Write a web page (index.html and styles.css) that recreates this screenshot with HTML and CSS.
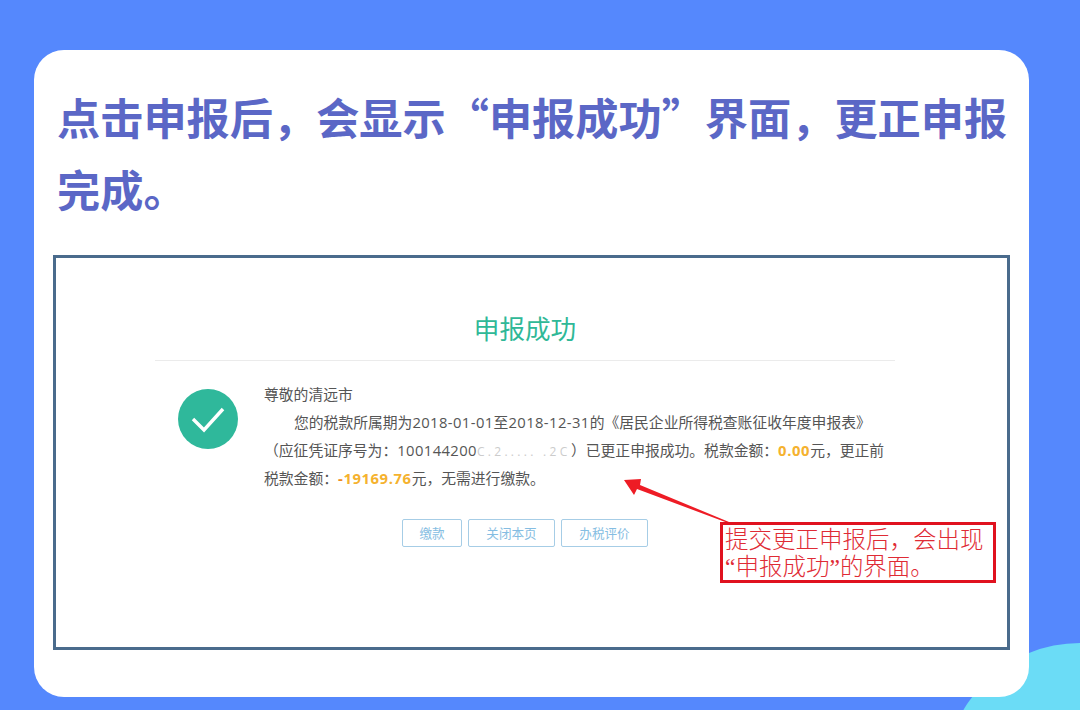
FILE: index.html
```html
<!DOCTYPE html>
<html lang="zh-CN">
<head>
<meta charset="utf-8">
<title>申报成功</title>
<link rel="stylesheet" href="styles.css">
</head>
<body>
<div class="blob"></div>
<main class="card">
  <h1 class="title">点击申报后，会显示“申报成功”界面，更正申报<br>完成。</h1>
  <section class="shot">
    <h2 class="shot-title">申报成功</h2>
    <div class="rule"></div>
    <div class="message">
      <div class="tick">
        <svg viewBox="0 0 60 60" width="60" height="60"><path d="M15 30 L26 41 L45 20" fill="none" stroke="#fff" stroke-width="3.4"/></svg>
      </div>
      <div class="copy">
        <p>尊敬的清远市</p>
        <p class="indent">您的税款所属期为<span class="num">2018-01-01</span>至<span class="num">2018-12-31</span>的《居民企业所得税查账征收年度申报表》</p>
        <p>（应征凭证序号为：<span class="num">100144200</span><span class="redact">C.2.....  .2C</span>）已更正申报成功。税款金额：<b class="amt">0.00</b>元，更正前</p>
        <p>税款金额：<b class="amt"><span class="minus">-</span>19169.76</b>元，无需进行缴款。</p>
      </div>
    </div>
    <div class="buttons">
      <span class="btn btn-short">缴款</span>
      <span class="btn">关闭本页</span>
      <span class="btn">办税评价</span>
    </div>
    <svg class="arrow" viewBox="0 0 110 50" width="110" height="50"><path d="M3 3 L20 2 L19 8 L108 45 L107 46 L16 12 L13 18 Z" fill="#ee1c25"/></svg>
    <div class="note">
      <div>提交更正申报后，会出现</div>
      <div><span class="q">“</span>申报成功<span class="q">”</span>的界面。</div>
    </div>
  </section>
</main>
</body>
</html>
```
FILE: styles.css
```css
* { box-sizing: border-box; }
html, body { margin: 0; height: 710px; overflow: hidden; }
body {
  position: relative;
  background: #5588fd;
  padding: 50px 51px 13px 34px;
  font-family: "Noto Sans CJK SC", "Open Sans", sans-serif;
}
.blob {
  position: absolute;
  left: 945px;
  top: 643px;
  width: 135px;
  height: 67px;
  clip-path: circle(135px at 135px 135px);
  background: #6bdcf6;
}
.card {
  position: relative;
  height: 647px;
  background: #fff;
  border-radius: 30px;
  padding: 30px 19px 0 19px;
}
.title {
  margin: 0 0 31px 4px;
  font-size: 43.2px;
  line-height: 72px;
  font-weight: 700;
  color: #5b67c6;
  white-space: nowrap;
}
.shot {
  position: relative;
  width: 957px;
  height: 395px;
  border: 3px solid #4a6b8c;
  padding: 52px 112px 0 99px;
}
.shot-title {
  margin: 0;
  text-align: center;
  font-size: 25.6px;
  line-height: 36px;
  font-weight: 400;
  color: #2fb897;
}
.rule {
  height: 1px;
  margin-top: 14px;
  background: #ebebeb;
}
.message {
  display: flex;
  margin: 19px 0 0 23px;
}
.tick {
  width: 60px;
  height: 60px;
  margin-top: 9px;
  border-radius: 50%;
  background: #2fb89b;
  flex: none;
}
.tick svg { display: block; }
.copy {
  margin-left: 26px;
  font-size: 14.8px;
  line-height: 28px;
  color: #555;
  white-space: nowrap;
}
.copy p { margin: 0; }
.indent { padding-left: 30px; }
.num { font-family: "Open Sans", sans-serif; letter-spacing: 0.4px; line-height: 1; }
.redact {
  display: inline-block;
  width: 94px;
  font-family: "Open Sans", sans-serif;
  color: #ccc;
  font-size: 12px;
  line-height: 1;
  letter-spacing: 3.3px;
}
.amt { font-family: "Open Sans", sans-serif; color: #f5b22e; font-weight: 700; letter-spacing: 0.6px; line-height: 1; }
.minus { color: #ee8a22; }
.buttons {
  display: flex;
  gap: 6px;
  margin: 27px 0 0 247px;
}
.btn {
  width: 87px;
  height: 28px;
  border: 1.5px solid #a6cde6;
  border-radius: 2px;
  font-size: 12.6px;
  line-height: 25px;
  text-align: center;
  color: #85bde2;
}
.btn-short { width: 60px; }
.arrow {
  position: absolute;
  left: 565px;
  top: 219px;
}
.note {
  position: absolute;
  left: 664px;
  top: 264px;
  width: 276px;
  height: 61px;
  border: 3px solid #e0121f;
  padding: 0 0 0 2px;
  font-size: 23.5px;
  line-height: 26.5px;
  color: #df2b35;
  font-weight: 300;
  white-space: nowrap;
}
.q { font-family: "Liberation Serif", serif; }
```
